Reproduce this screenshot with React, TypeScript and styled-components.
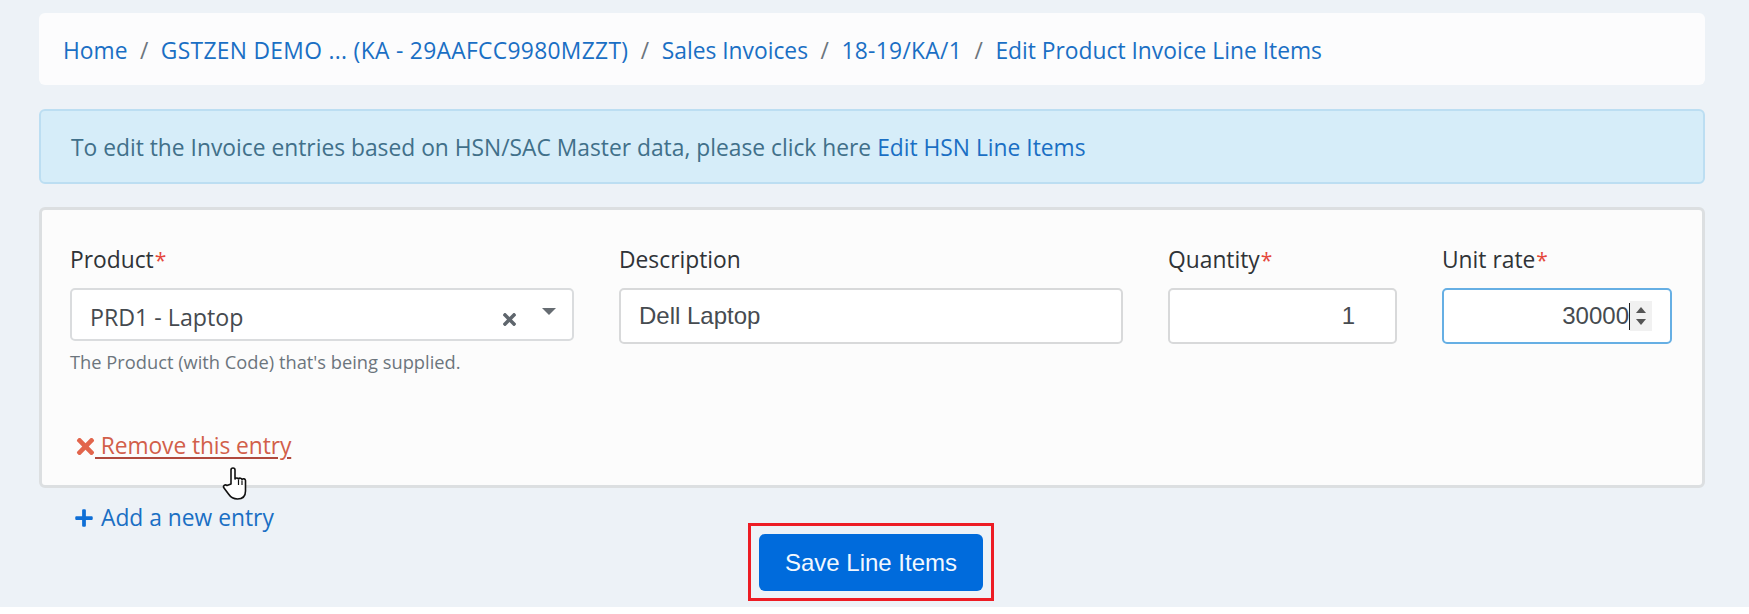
import React from 'react';
import styled, { createGlobalStyle } from 'styled-components';
import { FaPlus, FaTimes } from 'react-icons/fa';

const uiFont = '"Open Sans", "Noto Sans", sans-serif';
const inputFont = '"Liberation Sans", Arial, sans-serif';

const GlobalStyle = createGlobalStyle`
  html, body {
    margin: 0;
    padding: 0;
    background: #fff;
  }

  * {
    box-sizing: border-box;
  }
`;

const Page = styled.div`
  position: relative;
  height: 607px;
  padding: 13px 44px 0 39px;
  background: #edf2f7;
  font-family: ${uiFont};
  font-size: 22.8px;
  overflow: hidden;
`;

const Breadcrumb = styled.nav`
  display: flex;
  align-items: center;
  height: 72px;
  padding: 2px 24px 0;
  background: #fcfcfd;
  border-radius: 6px;
  color: #6c757d;
`;

const Crumb = styled.a<{ $spread?: string }>`
  color: #1a6fc4;
  letter-spacing: ${({ $spread }) => $spread || 'normal'};
`;

const Slash = styled.span`
  padding: 0 12.5px;
  color: #6c757d;
`;

const Alert = styled.div`
  display: flex;
  align-items: center;
  height: 75px;
  margin-top: 24px;
  padding: 2px 30px 0;
  background: #d6edf9;
  border: 2px solid #bcdef2;
  border-radius: 6px;
  color: #41708a;

  a {
    margin-left: 6px;
    color: #1a6fc4;
  }
`;

const Card = styled.section`
  height: 281px;
  margin-top: 23px;
  padding: 35px 30px 0 28px;
  background: #fcfcfc;
  border: 3px solid #dcdfe1;
  border-radius: 6px;
`;

const FormRow = styled.div`
  display: grid;
  grid-template-columns: 504px 504px 229px 230px;
  column-gap: 45px;
`;

const Field = styled.div`
  display: flex;
  flex-direction: column;
`;

const Label = styled.label`
  height: 32px;
  line-height: 29px;
  color: #2f3337;
`;

const Required = styled.span`
  margin-left: 1px;
  color: #e5483c;
  font-size: 21px;
`;

const Select = styled.div`
  display: flex;
  align-items: center;
  height: 53px;
  margin-top: 11px;
  padding: 4px 16px 0 18px;
  background: #fff;
  border: 2px solid #dadcde;
  border-radius: 5px;
  color: #454a4f;
  font-size: 23.2px;
`;

const SelectValue = styled.span`
  flex: 1;
`;

const Clear = styled.span`
  display: flex;
  margin: 6px 23px 0 0;
  color: #5f666d;
  font-size: 19px;
`;

const Caret = styled.span`
  width: 0;
  height: 0;
  margin-bottom: 10px;
  border-left: 7px solid transparent;
  border-right: 7px solid transparent;
  border-top: 7px solid #666c72;
`;

const Help = styled.small`
  margin-top: 10px;
  color: #6c757d;
  font-size: 18.3px;
  line-height: 22px;
`;

const TextBox = styled.div<{ $focused?: boolean; $end?: string }>`
  display: flex;
  align-items: center;
  justify-content: ${({ $end }) => ($end ? 'flex-end' : 'flex-start')};
  height: 56px;
  margin-top: 11px;
  padding: 0 ${({ $end }) => $end || '18px'} 0 18px;
  background: #fff;
  border: 2px solid ${({ $focused }) => ($focused ? '#66afe4' : '#d8d9da')};
  border-radius: 5px;
  color: #464b50;
  font-family: ${inputFont};
  font-size: 24px;
`;

const TextCaret = styled.span`
  width: 1px;
  height: 27px;
  background: #222;
`;

const Spinner = styled.span`
  display: flex;
  flex-direction: column;
  align-items: center;
  justify-content: space-between;
  width: 22px;
  height: 30px;
  padding: 6px 0;
  background: #f1f1f1;
`;

const SpinArrow = styled.span<{ $down?: boolean }>`
  width: 0;
  height: 0;
  border-left: 5px solid transparent;
  border-right: 5px solid transparent;
  ${({ $down }) => ($down ? 'border-top: 6px solid #555;' : 'border-bottom: 6px solid #555;')}
`;

const RemoveLink = styled.a`
  display: inline-flex;
  align-items: center;
  margin: 59px 0 0 3px;
  color: #d25f4a;
  line-height: 28px;

  svg {
    margin-right: -3px;
    color: #e2654c;
    font-size: 25px;
  }

  span {
    white-space: pre;
    letter-spacing: -0.1px;
    text-decoration: underline;
    text-decoration-color: #b04a3e;
    text-decoration-thickness: 2px;
    text-underline-offset: 3px;
  }
`;

const AddLink = styled.a`
  display: flex;
  align-items: center;
  gap: 7px;
  margin: 16px 0 0 35px;
  color: #1a6fc4;
  line-height: 28px;

  svg {
    color: #0f6fd6;
    font-size: 20px;
  }
`;

const SaveRow = styled.div`
  display: flex;
  justify-content: center;
  margin-top: -9px;
  padding-right: 2px;
`;

const Highlight = styled.div`
  padding: 8px 8px 7px;
  border: 3px solid #ed1c24;
`;

const SaveButton = styled.button`
  display: block;
  width: 224px;
  height: 57px;
  padding: 0;
  border: 0;
  border-radius: 6px;
  background: #006bdc;
  color: #f2f8ff;
  font-family: ${inputFont};
  font-size: 24px;
`;

const Cursor = styled.svg`
  position: absolute;
  left: 222px;
  top: 466px;
  width: 26px;
  height: 34px;
`;

export default function App() {
  return (
    <Page>
      <GlobalStyle />
      <Breadcrumb>
        <Crumb>Home</Crumb>
        <Slash>/</Slash>
        <Crumb $spread="0.32px">GSTZEN DEMO ... (KA - 29AAFCC9980MZZT)</Crumb>
        <Slash>/</Slash>
        <Crumb>Sales Invoices</Crumb>
        <Slash>/</Slash>
        <Crumb $spread="0.3px">18-19/KA/1</Crumb>
        <Slash>/</Slash>
        <Crumb>Edit Product Invoice Line Items</Crumb>
      </Breadcrumb>

      <Alert>
        To edit the Invoice entries based on HSN/SAC Master data, please click here
        <a>Edit HSN Line Items</a>
      </Alert>

      <Card>
        <FormRow>
          <Field>
            <Label>
              Product<Required>*</Required>
            </Label>
            <Select>
              <SelectValue>PRD1 - Laptop</SelectValue>
              <Clear>
                <FaTimes />
              </Clear>
              <Caret />
            </Select>
            <Help>The Product (with Code) that's being supplied.</Help>
          </Field>
          <Field>
            <Label>Description</Label>
            <TextBox>Dell Laptop</TextBox>
          </Field>
          <Field>
            <Label>
              Quantity<Required>*</Required>
            </Label>
            <TextBox $end="40px">1</TextBox>
          </Field>
          <Field>
            <Label>
              Unit rate<Required>*</Required>
            </Label>
            <TextBox $end="18px" $focused>
              30000
              <TextCaret />
              <Spinner>
                <SpinArrow />
                <SpinArrow $down />
              </Spinner>
            </TextBox>
          </Field>
        </FormRow>
        <RemoveLink>
          <FaTimes />
          <span> Remove this entry</span>
        </RemoveLink>
      </Card>

      <AddLink>
        <FaPlus /> Add a new entry
      </AddLink>

      <SaveRow>
        <Highlight>
          <SaveButton>Save Line Items</SaveButton>
        </Highlight>
      </SaveRow>

      <Cursor viewBox="0 0 26 34">
        <path
          d="M9 18 V4 a2 2 0 0 1 4 0 V13 a2 2 0 0 1 3.5 0 a2 2 0 0 1 3.5 .5 a2 2 0 0 1 3.5 1 V25 c0 5 -3 8 -8 8 c-5 0 -7 -2 -9 -5 L2 22 c-1.5 -2 1 -4 3 -2.5 Z"
          fill="#fff"
          stroke="#111"
          strokeWidth="1.6"
          strokeLinejoin="round"
        />
        <path d="M16.5 14 V19 M20 14.5 V19" stroke="#111" strokeWidth="1.2" />
      </Cursor>
    </Page>
  );
}
